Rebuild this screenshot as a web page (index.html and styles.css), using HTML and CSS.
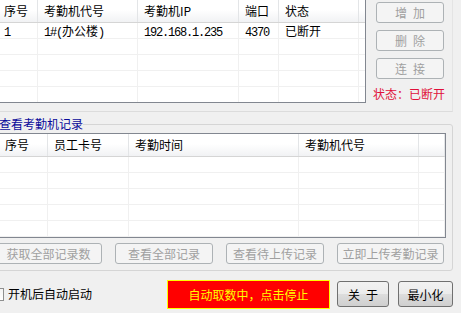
FILE: index.html
```html
<!DOCTYPE html>
<html lang="zh-CN">
<head>
<meta charset="utf-8">
<title>考勤机</title>
<link rel="stylesheet" href="styles.css">
</head>
<body>
<div class="top">
	<div class="list list1">
		<div class="row head">
			<div>序号</div><div>考勤机代号</div><div>考勤机IP</div><div>端口</div><div>状态</div><div></div>
		</div>
		<div class="row">
			<div><span class="num">1</span></div><div><span class="num">1#(</span>办公楼<span class="num">)</span></div><div><span class="num">192.168.1.235</span></div><div><span class="num">4370</span></div><div>已断开</div><div></div>
		</div>
		<div class="row"><div></div><div></div><div></div><div></div><div></div><div></div></div>
		<div class="row"><div></div><div></div><div></div><div></div><div></div><div></div></div>
		<div class="row"><div></div><div></div><div></div><div></div><div></div><div></div></div>
		<div class="row"><div></div><div></div><div></div><div></div><div></div><div></div></div>
	</div>
	<div class="side">
		<button class="btn off side-btn" disabled>增&ensp;加</button>
		<button class="btn off side-btn" disabled>删&ensp;除</button>
		<button class="btn off side-btn" disabled>连&ensp;接</button>
		<div class="state">状态：已断开</div>
	</div>
</div>

<fieldset class="group">
	<legend>查看考勤机记录</legend>
	<div class="list list2">
		<div class="row head">
			<div>序号</div><div>员工卡号</div><div>考勤时间</div><div>考勤机代号</div><div></div>
		</div>
		<div class="row"><div></div><div></div><div></div><div></div><div></div></div>
		<div class="row"><div></div><div></div><div></div><div></div><div></div></div>
		<div class="row"><div></div><div></div><div></div><div></div><div></div></div>
		<div class="row"><div></div><div></div><div></div><div></div><div></div></div>
		<div class="row"><div></div><div></div><div></div><div></div><div></div></div>
	</div>
	<div class="actions">
		<button class="btn off wide" disabled>获取全部记录数</button>
		<button class="btn off" disabled>查看全部记录</button>
		<button class="btn off" disabled>查看待上传记录</button>
		<button class="btn off wide" disabled>立即上传考勤记录</button>
	</div>
</fieldset>

<div class="footer">
	<span class="check"></span>
	<span class="check-label">开机后自动启动</span>
	<div class="running">自动取数中，点击停止</div>
	<button class="btn push about">关&ensp;于</button>
	<button class="btn push mini">最小化</button>
</div>
</body>
</html>
```

FILE: styles.css
```css
body {
	margin: 0;
	width: 461px;
	height: 313px;
	overflow: hidden;
	background-color: #f0f0f0;
	color: #000;
	font-family: "Noto Sans CJK SC", "Liberation Sans", sans-serif;
	font-size: 12px;
}

.top {
	display: flex;
	width: 453px;
	height: 112px;
	box-sizing: border-box;
	border-bottom: 1px solid #dcdcdc;
	border-right: 1px solid #e4e4e4;
}

.list {
	background: #fff;
	box-sizing: border-box;
	overflow: hidden;
}

.list1 {
	width: 368px;
	height: 103px;
	margin-left: -2px;
	border-right: 1px solid #828790;
	border-bottom: 1px solid #828790;
}

.list1 .row {
	grid-template-columns: 40px 100px 101px 40px 80px 1fr;
}

.row {
	display: grid;
	height: 16px;
	box-sizing: border-box;
	border-bottom: 1px solid #f0f0f0;
}

.row > div {
	border-right: 1px solid #f0f0f0;
	padding-left: 6px;
	line-height: 15px;
	white-space: nowrap;
}

.row.head {
	height: 23px;
	background: linear-gradient(#ffffff, #ffffff 45%, #f1f2f4);
	border-bottom: 1px solid #d5d5d5;
}

.row.head > div {
	line-height: 22px;
	border-right: 1px solid #e3e5e7;
}

.num {
	font-family: "Liberation Mono", monospace;
	letter-spacing: -1.2px;
}

.side {
	display: flex;
	flex-direction: column;
	gap: 7px;
	padding: 2px 0 0 10px;
}

.btn {
	font-family: "Noto Sans CJK SC", "Liberation Sans", sans-serif;
	font-size: 12px;
	padding: 0;
	margin: 0;
	border-radius: 3px;
	box-sizing: border-box;
}

.btn.off {
	height: 21px;
	width: 98px;
	border: 1px solid #adb2b5;
	background: #f4f4f4;
	color: #a0a0a0;
}

.side-btn.off {
	width: 68px;
}

.state {
	margin-top: 1px;
	margin-left: -3px;
	color: #e0103a;
	line-height: 14px;
}

.group {
	margin: 5px 0 0 -6px;
	width: 459px;
	box-sizing: border-box;
	padding: 0 6px 6px 4px;
	border: 1px solid #d5d5d5;
	border-radius: 3px;
}

.group legend {
	padding: 0;
	color: #0a0a9a;
	line-height: 14px;
}

.list2 {
	margin-top: 2px;
	width: 447px;
	height: 105px;
	border: 1px solid #828790;
	border-left: none;
}

.list2 .row {
	grid-template-columns: 49px 81px 170px 120px 1fr;
}

.actions {
	display: flex;
	gap: 13px;
	margin: 5px 0 0 -4px;
}

.btn.wide {
	width: 107px;
}

.footer {
	display: flex;
	align-items: flex-start;
	padding: 9px 8px 0 0;
}

.check {
	width: 13px;
	height: 13px;
	box-sizing: border-box;
	margin: 8px 0 0 -9px;
	border: 1px solid #8e8f8f;
	background: linear-gradient(#f4f4f4, #ffffff);
}

.check-label {
	margin: 6px 0 0 4px;
	line-height: 16px;
}

.running {
	margin-left: auto;
	width: 163px;
	height: 29px;
	box-sizing: border-box;
	border: 1px solid #ffff00;
	background: #ff0000;
	color: #ffff00;
	text-align: center;
	line-height: 27px;
}

.btn.push {
	height: 26px;
	margin-top: 1px;
	border: 1px solid #707070;
	background: linear-gradient(#f2f2f2, #ebebeb 50%, #dddddd 51%, #cfcfcf);
	color: #000;
}

.about {
	width: 52px;
	margin-left: 7px;
}

.mini {
	width: 55px;
	margin-left: 9px;
}
```
